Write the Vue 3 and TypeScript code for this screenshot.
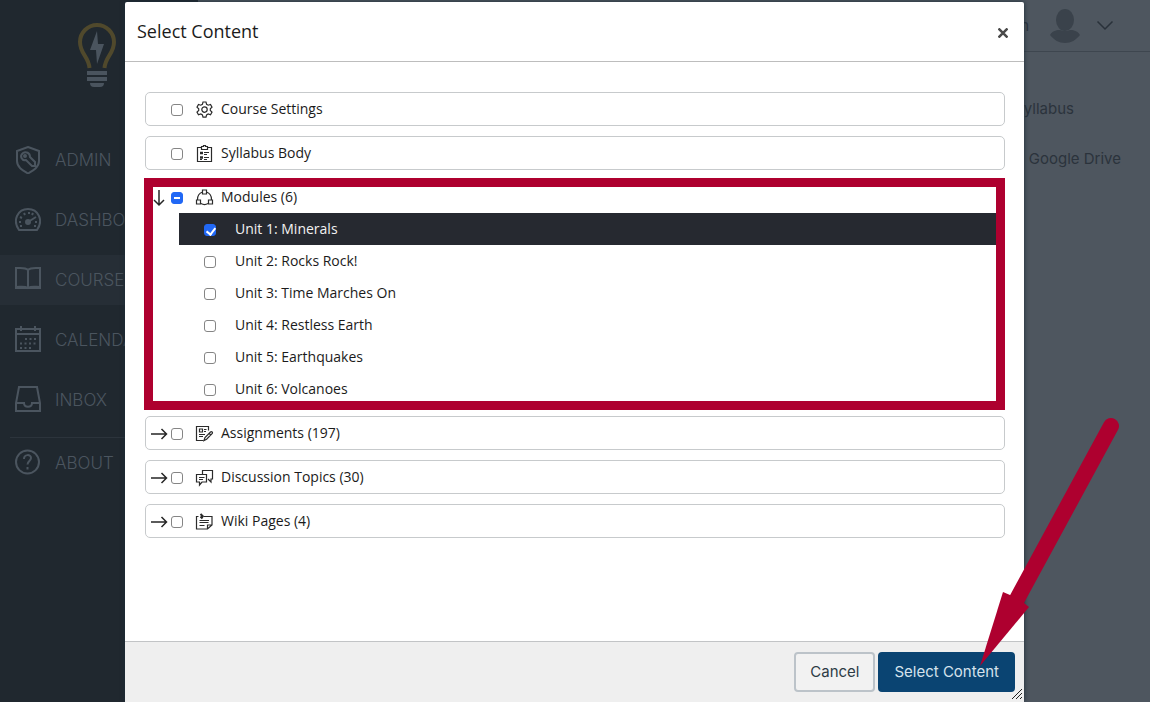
<script setup lang="ts">
import { ref } from 'vue'

interface Group {
  id: string
  label: string
  icon: string
}

const before: Group[] = [
  { id: 'settings', label: 'Course Settings', icon: 'gear' },
  { id: 'syllabus', label: 'Syllabus Body', icon: 'clipboard' },
]
const after: Group[] = [
  { id: 'assignments', label: 'Assignments (197)', icon: 'assignment' },
  { id: 'discussions', label: 'Discussion Topics (30)', icon: 'discussion' },
  { id: 'wiki', label: 'Wiki Pages (4)', icon: 'note' },
]
const units = ref([
  { name: 'Unit 1: Minerals', checked: true },
  { name: 'Unit 2: Rocks Rock!', checked: false },
  { name: 'Unit 3: Time Marches On', checked: false },
  { name: 'Unit 4: Restless Earth', checked: false },
  { name: 'Unit 5: Earthquakes', checked: false },
  { name: 'Unit 6: Volcanoes', checked: false },
])
const nav = [
  { label: 'ADMIN', icon: 'shield' },
  { label: 'DASHBOARD', icon: 'gauge' },
  { label: 'COURSES', icon: 'book' },
  { label: 'CALENDAR', icon: 'calendar' },
  { label: 'INBOX', icon: 'inbox' },
]

const icons: Record<string, string> = {
  gear: '<path d="M7 1h3l.6 2.3 1.6.9 2.3-.7L16 6.100l-1.700 1.600v1.800l1.700 1.600-1.500 2.600-2.300-.7-1.600.9L10 16.200H7l-.6-2.300-1.600-.9-2.300.7L1 11.100l1.700-1.600V7.700L1 6.100l1.500-2.600 2.300.7 1.600-.9z"/><circle cx="8.500" cy="8.600" r="2.700"/>',
  clipboard: '<path d="M5 2.500H1.500v14h14v-14H12M5.500 4.500v-3h2v-1h2v1h2v3z"/><path d="M4 8h3M4 12.500h3" stroke-width="2.500"/><path d="M8 7.500h5M8 9.500h3M8 12.500h5M4 14.500h2M8 14.500h3"/>',
  modules: '<path d="M6.500 1h4v4h-4zM.500 11h4v4h-4zM12.500 11h4v4h-4zM6.500 3C3.500 4 1.500 6.500 1.500 10.500M10.500 3c3 1 5 3.500 5 7.500M5 14.500c2 1.200 5 1.200 7 0"/>',
  assignment: '<path d="M12.500 5.500V1.500H.500v14h7M3.500 4h3v3h-3zM8 4.500h2.500M8 6.500h2M3 9.500h6M3 11.500h4"/><path d="M8 15.500l1-3 5.500-5.500q.8-.8 1.600 0t0 1.600L10.600 14.200zM13 8.200l1.800 1.800"/>',
  discussion: '<path d="M6.500 5V1.500h10v8.500h-1.500v3l-3-3"/><path d="M.500 5.500h10v7.500H6l-2.500 3v-3h-3zM3 8.500h5.500M3 10.500h4"/>',
  note: '<path d="M2.500 3.500H.500v12.500h11l4.500-4V3.500H8M11.500 16v-4H16M3.500 7.500h9.500M3.500 9.500h9M3.500 12.500h5"/><path d="M4.500 1l3 3M4.500 3.500l2 2" stroke-width="2"/>',
  shield: '<path d="M13 1l11 4v10c0 6-5 9-11 12.500C7 24 2 21 2 15V5z"/><path d="M8 7c3-2 7 0 7 4l5 5v4h-3l-6-6c-4 1-7-4-3-7z"/><circle cx="10" cy="10" r="1"/>',
  gauge: '<path d="M4 24C-3 14 3 3 13 3s16 11 9 21z"/><path d="M13 16l8-5"/><circle cx="13" cy="16" r="2" fill="currentColor"/><path d="M4 16h2M20 16h2M5 11l2 1M9 7l1 2M14 6v2M18 7l-1 2M5 20h2M19 20h2"/>',
  book: '<path d="M13 4C10 1 6 2 1 2v19c5 0 9-1 12 1 3-2 7-1 12-1V2c-5 0-9-1-12 2zM13 4v18"/><path d="M0 22h26"/>',
  calendar: '<path d="M1 3h24v22H1zM1 8h24M6 0v5M20 0v5"/><path d="M10 13h12M5 17.500h16M5 22h12" stroke-dasharray="2 2.500"/>',
  inbox: '<path d="M4 1h18l3 16v8H1v-8zM1 17h8c0 5 8 5 8 0h8"/>',
  about: '<circle cx="12.500" cy="13" r="11.500"/><path d="M9 10c0-5 7-5 7-1 0 3-3.500 3-3.500 6.500M12.500 18v2.500"/>',
}

function toggleAll(event: Event): void {
  const value = (event.target as HTMLInputElement).checked
  units.value.forEach((unit) => { unit.checked = value })
}
</script>

<template>
  <div class="page">
    <nav class="sidebar">
      <svg class="logo" viewBox="0 0 40 66" aria-hidden="true">
        <path d="M12.500 45C11.500 33 3 31 3 19a17 17 0 0 1 34 0c0 12-8.500 14-9.500 26" fill="none" stroke="#50492c" stroke-width="4" />
        <path d="M20 8L13 27h6l1 14 7-20h-6z" fill="#4a545e" />
        <path d="M10 48h20v4H10zM10 54h20v4H10zM13 60h14q0 4-4 4h-6q-4 0-4-4z" fill="#4a545e" />
      </svg>
      <a v-for="item in nav" :key="item.label" href="#" class="nav-item" :class="{ active: item.icon === 'book' }">
        <svg class="nav-icon" viewBox="0 0 26 28" v-html="icons[item.icon]"></svg>
        <span>{{ item.label }}</span>
      </a>
      <hr class="divider">
      <a href="#" class="nav-item"><svg class="nav-icon" viewBox="0 0 26 28" v-html="icons.about"></svg><span>ABOUT</span></a>
    </nav>
    <div class="main">
      <header class="topbar">
        <span>n</span>
        <svg class="avatar" viewBox="0 0 30 34" aria-hidden="true"><ellipse cx="15" cy="11" rx="9" ry="11" /><path d="M0 26c3-5 8-5 10-5q5 2 10 0c2 0 7 0 10 5-4 5-9 8-15 8S4 31 0 26z" /></svg>
        <svg class="chevron" viewBox="0 0 16 9" aria-hidden="true"><path d="M.500.500L8 8l7.500-7.500" /></svg>
      </header>
      <div class="side-links">
        <a href="#" class="syllabus-link">Syllabus</a>
        <a href="#" class="drive-link">Google Drive</a>
      </div>
    </div>

    <div class="overlay">
      <section class="dialog" role="dialog" aria-labelledby="dialog-title">
        <header class="dialog-head">
          <h1 id="dialog-title">Select Content</h1>
          <button type="button" class="close" aria-label="Close">
            <svg viewBox="0 0 10 10"><path d="M.500.500l9 9M9.500.500l-9 9" /></svg>
          </button>
        </header>
        <div class="dialog-body">
          <div v-for="group in before" :key="group.id" class="group">
            <div class="row">
              <span class="arrow"></span>
              <input :id="group.id" type="checkbox">
              <label :for="group.id"><svg class="icon" viewBox="0 0 17 17" v-html="icons[group.icon]"></svg>{{ group.label }}</label>
            </div>
          </div>
          <div class="group highlighted">
            <div class="row">
              <svg class="arrow" viewBox="0 0 18 18"><path d="M9 1v15M4 11l5 5 5-5" /></svg>
              <input id="modules" type="checkbox" :indeterminate="true" @change="toggleAll">
              <label for="modules"><svg class="icon" viewBox="0 0 17 17" v-html="icons.modules"></svg>Modules (6)</label>
            </div>
            <ul class="units">
              <li v-for="(unit, i) in units" :key="unit.name" :class="{ selected: unit.checked }">
                <input :id="'unit-' + i" v-model="unit.checked" type="checkbox">
                <label :for="'unit-' + i">{{ unit.name }}</label>
              </li>
            </ul>
          </div>
          <div v-for="group in after" :key="group.id" class="group">
            <div class="row">
              <svg class="arrow" viewBox="0 0 18 18"><path d="M1 9h15.500M11.500 4l5 5-5 5" /></svg>
              <input :id="group.id" type="checkbox">
              <label :for="group.id"><svg class="icon" viewBox="0 0 17 17" v-html="icons[group.icon]"></svg>{{ group.label }}</label>
            </div>
          </div>
        </div>
        <footer class="dialog-foot">
          <button type="button" class="btn">Cancel</button>
          <button type="button" class="btn primary">Select Content</button>
          <svg class="grip" viewBox="0 0 12 12" aria-hidden="true"><path d="M1 11L11 1M5 11l6-6M9 11l2-2" /></svg>
        </footer>
      </section>
    </div>
    <svg class="pointer" viewBox="0 0 140 249" aria-hidden="true">
      <path d="M131 9L36 184" stroke="#ae002f" stroke-width="16" stroke-linecap="round" />
      <path d="M0 249L23 175l7 3 14 8 5 4z" fill="#ae002f" />
    </svg>
  </div>
</template>

<style>
body { margin: 0; }
</style>

<style scoped>
* { box-sizing: border-box; }
.page {
  position: relative;
  display: flex;
  min-height: 100vh;
  overflow: hidden;
  background: #4e565f;
  color: #2b333c;
  font-family: "Open Sans", "Noto Sans", sans-serif;
  font-size: 14px;
}
a { color: inherit; text-decoration: none; }
.sidebar { width: 198px; flex: none; background: #20282f; color: #4b555f; }
.logo { display: block; width: 40px; height: 66px; margin: 23px 0 46px 77px; }
.nav-item {
  display: flex;
  align-items: center;
  gap: 14px;
  height: 50px;
  margin-bottom: 10px;
  padding-left: 15px;
  font: 300 17px Inter, sans-serif;
}
.nav-item.active { background: #262e36; }
.nav-icon { flex: none; width: 26px; height: 28px; fill: none; stroke: currentColor; stroke-width: 2; }
.divider { height: 1px; margin: 12px 0 0 10px; border: 0; background: #2c343c; }
.main { flex: 1; font-family: Inter, sans-serif; font-size: 15px; font-weight: 400; }
.topbar {
  display: flex;
  align-items: center;
  justify-content: flex-end;
  height: 52px;
  padding-right: 37px;
  border-bottom: 1px solid #3e464f;
}
.avatar { width: 30px; height: 34px; margin: 0 17px 0 21px; fill: #3a424b; }
.chevron { width: 16px; height: 9px; overflow: visible; fill: none; stroke: #29313a; stroke-width: 1.5; }
.side-links { display: flex; flex-direction: column; align-items: flex-end; gap: 30px; padding-top: 47px; line-height: 20px; }
.syllabus-link { margin-right: 76px; }
.drive-link { margin-right: 29px; }
.overlay { position: absolute; inset: 0; display: flex; padding: 2px 126px 0 125px; }
.dialog {
  display: flex;
  flex: 1;
  flex-direction: column;
  border-radius: 2px;
  background: #fff;
  color: #1b1b1b;
  box-shadow: 0 0 5px #1c2c38;
}
.dialog-head {
  display: flex;
  align-items: center;
  justify-content: space-between;
  height: 60px;
  padding: 0 16px 0 12px;
  border-bottom: 1px solid #bdbdbd;
}
h1 { margin: 0; padding-bottom: 2px; font-size: 18px; font-weight: 400; }
.close { display: flex; margin-top: 2px; padding: 0; border: 0; background: none; }
.close svg { width: 10px; height: 10px; fill: none; stroke: #4a4a4a; stroke-width: 2.5; }
.dialog-body { display: flex; flex: 1; flex-direction: column; gap: 10px; padding: 30px 19px 20px 20px; }
.group { position: relative; border: 1px solid #c7cacc; border-radius: 5px; }
.row { display: flex; align-items: center; height: 32px; }
.arrow { flex: none; width: 18px; height: 18px; margin: 2px 3px 0 4px; fill: none; stroke: #262626; stroke-width: 1.5; }
label { display: flex; align-items: center; padding-bottom: 2px; }
.icon { width: 17px; height: 17px; margin: 2px 8px 0 0; overflow: visible; fill: none; stroke: #2b2b2b; stroke-width: 1.2; }
input {
  position: relative;
  flex: none;
  width: 12px;
  height: 12px;
  margin: 2px 13px 0 0;
  border: 1px solid #858585;
  border-radius: 3px;
  appearance: none;
  background: #fff;
}
input:checked, input:indeterminate { border-color: #2168f5; background: #2168f5; }
input:indeterminate::before { content: ""; position: absolute; top: 4px; left: 2px; width: 6px; height: 2px; background: #fff; }
input:checked::before {
  content: "";
  position: absolute;
  top: 1px;
  left: 3px;
  width: 4px;
  height: 7px;
  border: solid #fff;
  border-width: 0 2px 2px 0;
  transform: rotate(38deg);
}
.units { margin: 0 0 0 33px; padding: 0; list-style: none; }
.units li { display: flex; align-items: center; height: 32px; padding-left: 25px; }
.units input { margin-right: 19px; }
.units .selected { background: #262930; color: #f2f2f2; }
.highlighted::after { content: ""; position: absolute; inset: -3px -1px -5px -2px; border: 9px solid #ae002f; pointer-events: none; }
.dialog-foot {
  position: relative;
  display: flex;
  justify-content: flex-end;
  gap: 3px;
  padding: 10px 9px;
  border-top: 1px solid #c2c4c6;
  background: #efefef;
}
.btn {
  height: 40px;
  padding: 0 14px 2px;
  border: 2px solid #bcc3c9;
  border-radius: 4px;
  background: #f2f2f2;
  color: #2d3b45;
  font: 400 15px Inter, sans-serif;
}
.btn.primary { border-color: #0a4472; background: #0a4472; color: #d5e2ec; }
.grip { position: absolute; right: 1px; bottom: 2px; width: 12px; height: 12px; stroke: #222; }
.pointer { position: absolute; right: 30px; bottom: 36px; width: 140px; height: 249px; fill: none; pointer-events: none; }
</style>
